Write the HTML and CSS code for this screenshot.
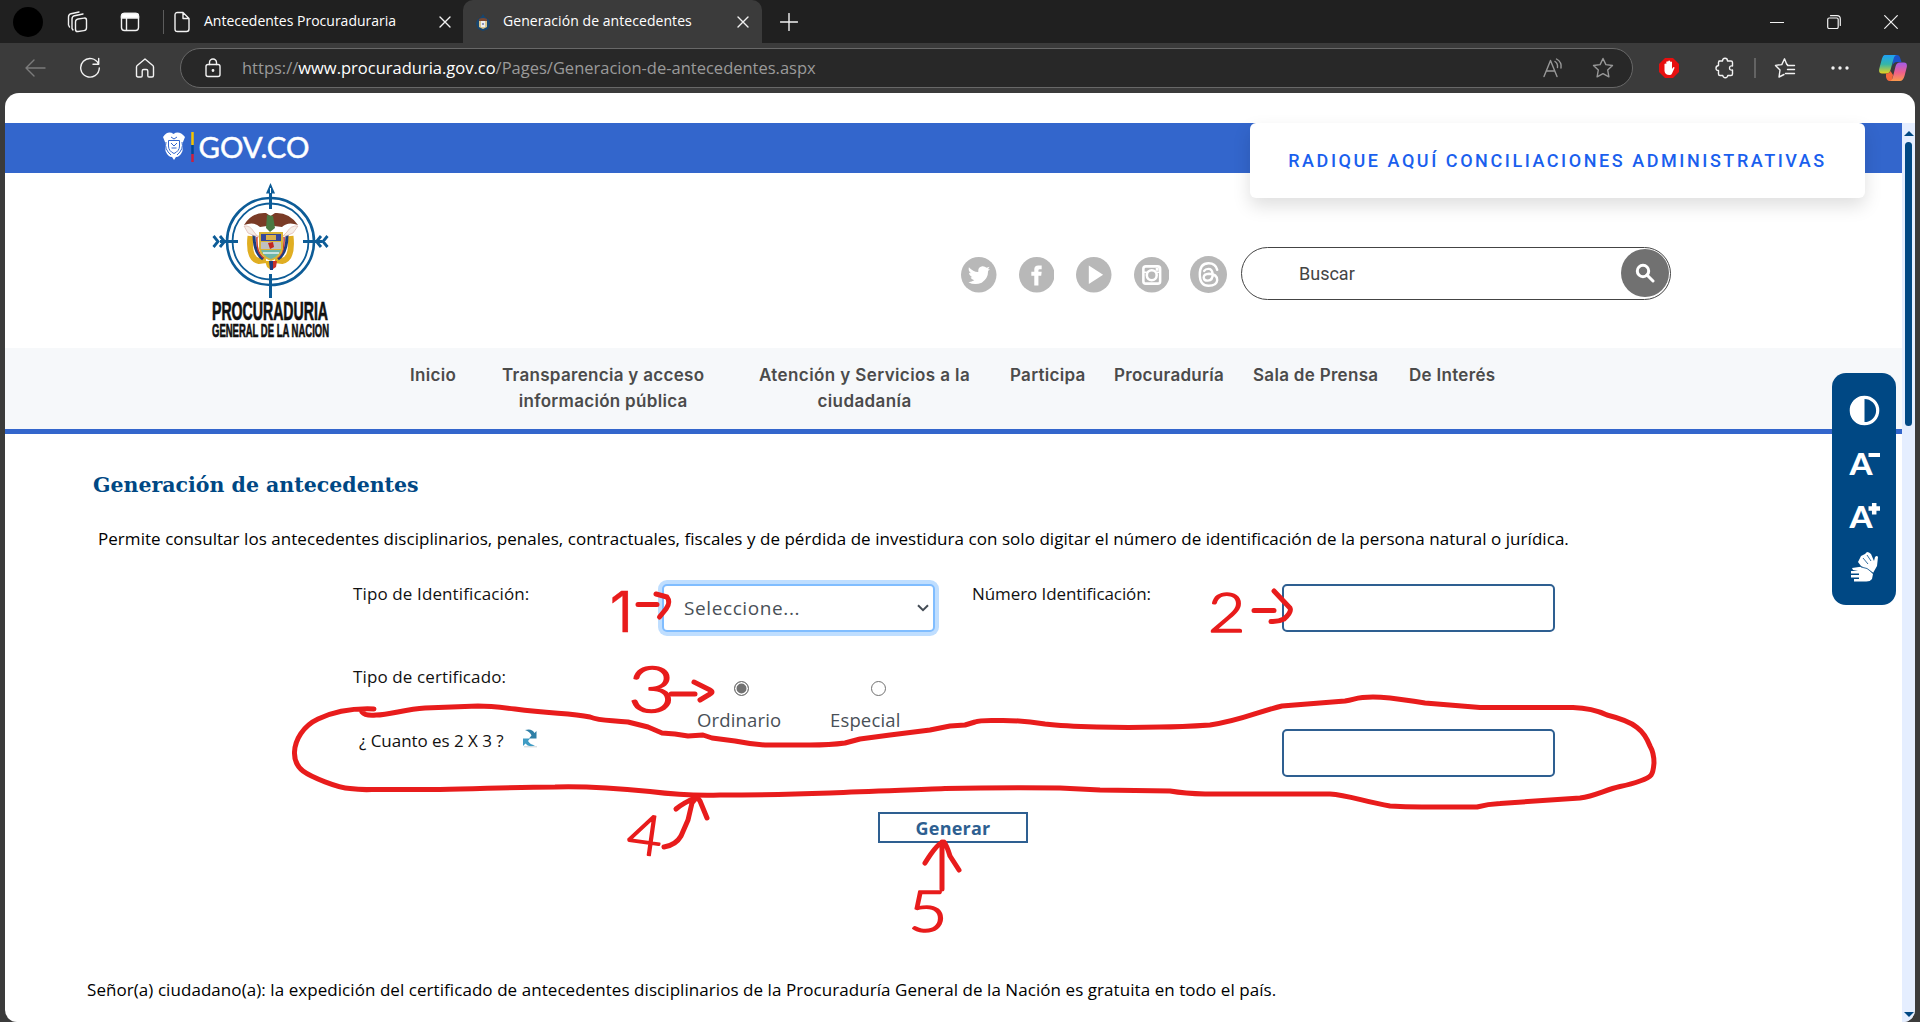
FILE: index.html
```html
<!DOCTYPE html>
<html lang="es">
<head>
<meta charset="utf-8">
<title>Generación de antecedentes</title>
<link rel="stylesheet" href="styles.css">
</head>
<body>
<div class="window">
  <header class="tabbar">
    <span class="avatar"></span>
    <svg class="ic workspaces" width="22" height="22" viewBox="0 0 22 22"><rect x="8.500" y="7.500" width="11" height="12.500" rx="2.500" transform="skewY(-8) translate(0 2)"/><path d="M5 17.500V8Q5 5.500 7.500 4.700L16 3M1.500 14V6Q1.500 3.500 4 2.700L12 1M5 17.500L6 19M1.500 14L2.500 16" /></svg>
    <svg class="ic tabactions" width="20" height="20" viewBox="0 0 20 20"><rect x="1.500" y="1.500" width="17" height="17" rx="3"/><path d="M1.500 4Q1.500 1.500 4 1.500H16Q18.500 1.500 18.500 4V6H1.500Z" fill="#fff"/><path d="M6.500 6V18"/></svg>
    <span class="sep"></span>
    <div class="tab first">
      <svg class="ic" width="18" height="22" viewBox="0 0 18 22"><path d="M2 4Q2 1.500 4.500 1.500H10L16 7.500V18Q16 20.500 13.500 20.500H4.500Q2 20.500 2 18ZM10 1.500V7.500H16"/></svg>
      <span class="title">Antecedentes Procuraduraria</span>
      <svg class="ic x" width="12" height="12" viewBox="0 0 12 12"><path d="M1 1L11 11M11 1L1 11"/></svg>
    </div>
    <div class="tab active">
      <svg width="14" height="18" viewBox="0 0 14 18"><path d="M7 0L9 3L13 6L14 10L12 15L7 17L2 15L0 10L1 6L5 3Z" fill="#17456e"/><path d="M3 5Q7 3 11 5V7H3Z" fill="#7a4730"/><path d="M3 7H11V13L7 15L3 13Z" fill="#d8c58e"/><path d="M5 7H9V13H5Z" fill="#e9eef2"/><path d="M6 9H8V11H6Z" fill="#8a93b8"/></svg>
      <span class="title">Generación de antecedentes</span>
      <svg class="ic x" width="12" height="12" viewBox="0 0 12 12"><path d="M1 1L11 11M11 1L1 11"/></svg>
    </div>
    <svg class="ic plus" width="18" height="18" viewBox="0 0 18 18"><path d="M9 .5V17.500M.5 9H17.500"/></svg>
    <div class="controls">
      <svg class="ic thin" width="14" height="14" viewBox="0 0 14 14"><path d="M.5 7.500H13.500"/></svg>
      <svg class="ic thin" width="14" height="14" viewBox="0 0 14 14"><rect x=".7" y="3" width="10.500" height="10.500" rx="1.500"/><path d="M3.500 .7H10Q13.300 .7 13.300 4V10.500"/></svg>
      <svg class="ic thin" width="14" height="14" viewBox="0 0 14 14"><path d="M.7 .7L13.300 13.300M13.300 .7L.7 13.300"/></svg>
    </div>
  </header>

  <div class="toolbar">
    <svg class="ic back" width="22" height="20" viewBox="0 0 22 20"><path d="M10 2L2 10L10 18M2 10H21"/></svg>
    <svg class="ic reload" width="22" height="22" viewBox="0 0 22 22"><path d="M19.500 7A9.300 9.300 0 1 0 20.300 11M19.700 1.500V7.200H14"/></svg>
    <svg class="ic home" width="20" height="20" viewBox="0 0 20 20"><path d="M1.500 9Q1.500 8 2.500 7.200L10 1L17.500 7.200Q18.500 8 18.500 9V17.500Q18.500 19 17 19H14Q12.800 19 12.800 17.800V13Q12.800 11.500 11.300 11.500H8.700Q7.200 11.500 7.200 13V17.800Q7.200 19 6 19H3Q1.500 19 1.500 17.500Z"/></svg>
    <div class="address">
      <svg class="ic" width="18" height="20" viewBox="0 0 18 20"><rect x="2" y="6.500" width="14" height="12" rx="2"/><path d="M5.500 6.500V4.500A3.500 3.500 0 0 1 12.500 4.500V6.500"/><circle cx="9" cy="12.500" r=".7" fill="#fff"/></svg>
      <span class="url">https://<b>www.procuraduria.gov.co</b>/Pages/Generacion-de-antecedentes.aspx</span>
      <svg class="ic dim aloud" width="20" height="20" viewBox="0 0 20 20"><path d="M1 18.500L7.500 2.500L14 18.500M3.500 13H11.500M12 3.500Q15 5.500 14.500 9.500M13.500 1Q19 4 18 10"/></svg>
      <svg class="ic dim" width="22" height="22" viewBox="0 0 22 22"><path d="M11 1.500L13.900 7.600L20.500 8.500L15.700 13L16.900 19.800L11 16.600L5.100 19.800L6.300 13L1.500 8.500L8.100 7.600Z"/></svg>
    </div>
    <svg class="blocker" width="20" height="20" viewBox="0 0 20 20"><path d="M6 0H14L20 6V14L14 20H6L0 14V6Z" fill="#e60f0f"/><path d="M5.500 11V6Q6.300 5 7.300 6V9V3.800Q8.300 2.800 9.200 3.800V8.500V3Q10.200 2 11.200 3V8.500V4Q12.200 3.200 13 4V11L14.200 9.300Q15.500 8.700 15.500 10L13 15.500Q12.500 17 10.500 17Q6 17 5.500 13Z" fill="#fff"/></svg>
    <svg class="ic puzzle" width="20" height="22" viewBox="0 0 20 22"><path d="M4 4H7.500Q7.500 1.300 10 1.300T12.500 4H16Q17.500 4 17.500 5.500V9Q14.500 8.500 14.500 11T17.500 13V17Q17.500 18.500 16 18.500H12.800Q12.500 20.700 10.300 20.700T7.800 18.500H5Q3.500 18.500 3.500 17V13.500Q1 13.500 1 11.200T3.500 8.500V5.500Q3.500 4 5 4"/></svg>
    <span class="sep2"></span>
    <svg class="ic favs" width="22" height="22" viewBox="0 0 22 22"><path d="M13.500 7.500H12.800L10.500 1.800L7.800 7.600L1.500 8.400L6 13L5 20L10 17.500M13.500 8.500H20.500M13.500 12.500H20.500M11.500 16.500H20.500"/></svg>
    <svg class="dots" width="18" height="6" viewBox="0 0 18 6"><circle cx="2" cy="3" r="1.700"/><circle cx="9" cy="3" r="1.700"/><circle cx="16" cy="3" r="1.700"/></svg>
    <svg class="copilot" width="28" height="26" viewBox="0 0 28 26">
      <defs>
        <linearGradient id="ca" x1="0" y1="0" x2="0" y2="1"><stop offset="0" stop-color="#1ea0f5"/><stop offset=".5" stop-color="#35b6a8"/><stop offset="1" stop-color="#e8d21c"/></linearGradient>
        <linearGradient id="cb" x1="0" y1="0" x2="0" y2="1"><stop offset="0" stop-color="#a25bea"/><stop offset=".55" stop-color="#f0608a"/><stop offset="1" stop-color="#fb9a4c"/></linearGradient>
      </defs>
      <path d="M14 0H18Q20.500 0 21.500 4L22.500 7H18Q14.500 7 13.500 11Z" fill="#1b52c9"/>
      <path d="M5.500 0H18Q15.500 0 14.500 4L11.500 15Q10.500 18.500 7 18.500H3Q-.8 18.500 .3 13.500L3 3.500Q4 .3 5.500 0Z" fill="url(#ca)"/>
      <path d="M7 18.500Q10.500 18.500 11.500 16L14 20L13 26H10.500Q8 26 7 22Z" fill="#f5683c"/>
      <path d="M21 7.500H25Q28.500 7.500 27.800 12L25.500 21Q24 26 21 26H10.500Q13 26 14 21.500L16.500 11.500Q17.500 7.500 21 7.500Z" fill="url(#cb)"/>
    </svg>
  </div>

  <div class="page">
    <div class="strip"></div>
    <div class="viewport">
      <div class="site">
        <div class="govbar">
          <svg width="152" height="34" viewBox="0 0 152 34">
            <g fill="#fff"><path d="M0 7Q5 0 10.500 4Q16 0 22 7L20 12L19.500 21Q17 27 13 27L11 30L9 27Q5 27 2.500 21L2 12Z"/></g>
            <g fill="none" stroke="#3366cc" stroke-width="1"><path d="M5.500 10.500H16.500V16Q16.500 21 11 23.500Q5.500 21 5.500 16ZM8 7L11 9L14 7M8 13L11 16L14 13M8.500 18H13.500M3 12Q1 19 8 25M19 12Q21 19 14 25"/></g>
            <path d="M29.500 2V15" stroke="#f5c400" stroke-width="2.500"/><path d="M29.500 15V24" stroke="#004a98" stroke-width="2.500"/><path d="M29.500 24V32" stroke="#cc1f3c" stroke-width="2.500"/>
            <text class="gov" x="35.500" y="27.500" textLength="111" lengthAdjust="spacingAndGlyphs">GOV.CO</text>
          </svg>
        </div>

        <div class="masthead">
          <svg class="crest" width="120" height="160" viewBox="-1 0 120 160">
            <g fill="none" stroke="#0d5c97"><circle cx="58.500" cy="58.500" r="43.500" stroke-width="2.600"/><circle cx="58.500" cy="58.500" r="38" stroke-width="1.800"/><path d="M58.500 8V26M58.500 91V115M8 58.500H26M91 58.500H110" stroke-width="3"/><path d="M1.500 53L6 58.500L1.500 64M8 53L12.500 58.500L8 64M115.500 53L111 58.500L115.500 64M109 53L104.500 58.500L109 64" stroke-width="2.800"/></g>
            <path d="M58.500 0L63 10.500H54Z" fill="#0d5c97"/><path d="M58.500 5V10" stroke="#fff"/>
            <path d="M38.500 53Q36 76 47 78L54 77M78.500 53Q81 76 70 78L63 77" fill="none" stroke="#e0ae22" stroke-width="6"/>
            <path d="M42 52Q42 70 51 76M75 52Q75 70 66 76" fill="none" stroke="#1d3d80" stroke-width="3"/>
            <path d="M45 54Q44 70 52 75M72 54Q73 70 65 75" fill="none" stroke="#c43a2f" stroke-width="1.500"/>
            <path d="M32 43Q38 42 42 49L46 54H70L75 49Q79 42 86 43L81 50L74 53H43L36 50Z" fill="#f6eee8" stroke="#d9a9a0" stroke-width=".6"/>
            <path d="M32 42Q40 29 54 30L58.500 33L63 30Q77 29 86 42Q76 38 70 44L62 43L59 47L55 43L48 44Q42 38 32 42Z" fill="#7a3b26"/>
            <path d="M55 32L61 33L63 45L58 49L54 45Z" fill="#4a7a42"/>
            <path d="M47 49H71V66Q70 74 59 78Q48 74 47 66Z" fill="#d9b436"/><path d="M49 51H69V58H49Z" fill="#34479a"/><path d="M54 52H64V57H54Z" fill="#d9b04d"/><path d="M49 59H69V66H49Z" fill="#bfc0c0"/><path d="M56 60L61 59L62 64L58 66Z" fill="#c5271c"/><path d="M49 67H69Q67 73 59 76Q51 73 49 67Z" fill="#6fb5a8"/><path d="M51 70H67" stroke="#e6f2f4" stroke-width="1.500"/>
            <path d="M53 78H58L59 87L55 84Z" fill="#e3b21f"/><path d="M57 78H61V87H58Z" fill="#1d3d80"/><path d="M61 78H65L64 84L61 86Z" fill="#c9312a"/>
            <text class="crest-a" x="0" y="137" textLength="116" lengthAdjust="spacingAndGlyphs">PROCURADURIA</text>
            <text class="crest-b" x="0" y="153.500" textLength="117" lengthAdjust="spacingAndGlyphs">GENERAL DE LA NACION</text>
          </svg>
          <div class="social">
            <svg viewBox="0 0 36 36"><circle cx="18" cy="18" r="18"/><path d="M8 10.500Q12.500 15.500 17.500 15.300Q17 10 21.500 9.300Q24 9 26 11L29 10L27.300 12.500L29.300 12.200L27.500 14.300Q27.500 22 21 26Q14 29 7.500 25.500Q11 25.500 13.500 23.700Q10.500 23 9.700 20.500H11.500Q8.300 19 8.200 16L10 16.500Q7 14 8 10.500Z" fill="#fff"/></svg>
            <svg viewBox="0 0 36 36"><circle cx="18" cy="18" r="18"/><path d="M15.500 29V19H12.500V15H15.500V12.500Q15.500 8.500 19.500 8.500H23V12.300H21Q19.700 12.300 19.700 13.500V15H23L22.500 19H19.700V29Z" fill="#fff"/></svg>
            <svg viewBox="0 0 36 36"><circle cx="18" cy="18" r="18"/><path d="M13 8.500L27.500 18L13 27.500Z" fill="#fff"/></svg>
            <svg viewBox="0 0 36 36"><circle cx="18" cy="18" r="18"/><rect x="9.500" y="9.500" width="17" height="17.500" rx="2.500" fill="none" stroke="#fff" stroke-width="2.600"/><circle cx="18" cy="18.500" r="5" fill="none" stroke="#fff" stroke-width="2.600"/><path d="M9 15.500H13M23 15.500H27" stroke="#fff" stroke-width="1.500"/><rect x="22" y="11" width="3" height="3" fill="#fff"/></svg>
            <svg class="threads" viewBox="0 0 36 36"><circle cx="18" cy="18" r="18"/><path d="M26.500 13.500Q25 7 18 7Q9.500 7 9.500 18T18 29Q26 29 26.500 23.500Q26.500 17.500 18.500 17.300Q13.300 17.500 13.300 21Q13.500 24 17.300 24Q22.500 23.500 22 17Q21.500 12.500 18 12.500Q15 12.500 13.800 14.500" fill="none" stroke="#fff" stroke-width="2.300" stroke-linecap="round"/></svg>
          </div>
          <div class="search"><span>Buscar</span><i><svg width="20" height="20" viewBox="0 0 20 20"><circle cx="8" cy="8" r="5.700"/><path d="M12 12L18 18"/></svg></i></div>
        </div>

        <nav class="menu">
          <a>Inicio</a><a>Transparencia y acceso<br>información pública</a><a class="wide">Atención y Servicios a la<br>ciudadanía</a><a>Participa</a><a>Procuraduría</a><a>Sala de Prensa</a><a>De Interés</a>
        </nav>

        <main class="content">
          <h1>Generación de antecedentes</h1>
          <p class="intro">Permite consultar los antecedentes disciplinarios, penales, contractuales, fiscales y de pérdida de investidura con solo digitar el número de identificación de la persona natural o jurídica.</p>
          <div class="form">
            <label>Tipo de Identificación:</label>
            <div class="select">Seleccione...<svg width="12" height="8" viewBox="0 0 12 8"><path d="M1 1.200L6 6.200L11 1.200"/></svg></div>
            <label class="num">Número Identificación:</label>
            <div class="input"></div>
            <label class="cert">Tipo de certificado:</label>
            <div class="radios">
              <span class="opt ord"><i class="radio on"></i>Ordinario</span>
              <span class="opt esp"><i class="radio"></i>Especial</span>
            </div>
            <label class="captcha">¿ Cuanto es 2 X 3 ?<svg width="16" height="19" viewBox="0 0 16 19"><path d="M3 1Q10 -1 12.500 4L14.500 2V9.500H7L9.500 6.500Q8 2.500 3 1Z" fill="#2f7fa6"/><path d="M1 9.500H8L6 12Q8 15.500 13 16.500Q6 18.500 3.500 14.500L1 17Z" fill="#3f9cc4"/><path d="M2 17.800H15" stroke="#ccd3d6"/></svg></label>
            <div class="input answer"></div>
          </div>
          <div class="generate">Generar</div>
          <p class="notice">Señor(a) ciudadano(a): la expedición del certificado de antecedentes disciplinarios de la Procuraduría General de la Nación es gratuita en todo el país.</p>
        </main>

        <div class="card">RADIQUE AQUÍ CONCILIACIONES ADMINISTRATIVAS</div>
        <aside class="access">
          <svg width="64" height="232" viewBox="0 0 64 232">
            <circle cx="32.500" cy="37.500" r="13.200" fill="none" stroke="#fff" stroke-width="3.200"/><path d="M32.500 23A14.500 14.500 0 0 0 32.500 52Z" fill="#fff"/>
            <text x="17.500" y="102" textLength="23" lengthAdjust="spacingAndGlyphs">A</text><path d="M36.500 82H48" stroke="#fff" stroke-width="4"/>
            <text x="17.500" y="155" textLength="23" lengthAdjust="spacingAndGlyphs">A</text><path d="M36.500 135.500H48M42.200 130V141.500" stroke="#fff" stroke-width="4.500"/>
            <path d="M26 189L29 183L33 181L35 179Q37 179 39 181L42 188L43 184Q45 182 46 184L45 193L41 200L35 196L29 193Z" fill="#fff"/>
            <path d="M20 195L27 194Q34 193 37 197L41 201L40 206Q38 209 33 208.500H22V206H27V204.500H19V202H27V200.500H19V198H26L21 197Z" fill="#fff"/>
            <path d="M29 194Q35 194 41 200M31 185L36 191M35 182L39 188" stroke="#004884" fill="none" stroke-width=".8"/>
          </svg>
        </aside>
      </div>
      <div class="scroll"><span class="up"></span><span class="thumb"></span><span class="down"></span></div>
    </div>
  </div>

  <svg class="ink" width="1920" height="1022" viewBox="0 0 1920 1022">
    <path d="M374 709C350 708 333 712 318 719S295 740 294.500 752Q294 764 303 771C311 777 338 788 350 788.500Q361 790 372 789.500H440C480 789 510 787 555 787C590 786 615 788 650 791.500C670 794 690 796 720 795C760 795 800 794 830 793C870 791 910 790 945 788.500Q1000 787.500 1060 788L1100 790L1170 791Q1185 793.500 1205 794H1330C1348 795 1365 802 1390 806Q1405 807 1422 807H1477Q1488 804 1500 803.500L1580 798C1595 796 1605 790 1620 786.500Q1632 784 1640 781C1652 777 1653 775 1654 763Q1654 753 1650 746C1644 730 1635 722 1607 715Q1592 708 1573 707.500H1480L1425 703C1405 700 1390 697 1373 697S1357 699 1345 701L1282 706C1260 711 1240 721 1210 725Q1180 727 1160 727C1120 728 1070 727 1045 724Q1020 720 998 720.500Q980 720 975 722L965 725L950 726L930 730L890 735L860 739L845 743Q830 745 810 745H765Q750 744 735 741L712 738L703 735L688 736L675 734L662 733L648 727L628 722C610 720 600 721 590 717C570 713 555 714 515 709Q490 706 478 706L425 708C405 709 390 715 376 715Q365 716 362 712"/>
    <path d="M638 604.500H657M656 594L667 597Q671 602 666 609L659.500 617"/>
    <path d="M1254 610.500H1274M1274 591L1290 608Q1292 612 1284 619Q1278 622 1271 621.500"/>
    <path d="M671 694H695M694 682L710 690Q714 692 710 694L700 700"/>
    <path d="M664 847Q676 845 681 836L688 820L692 803L697 797M676 809Q683 803 697 797L700 801L707 818"/>
    <path d="M942 889V842M925 863Q938 842 944 842Q947 846 950 856L959 870"/>
    <g class="digits">
      <text class="one" transform="translate(610 632)" font-size="56">1</text>
      <text transform="translate(1208 632) scale(1.150 1)" font-size="56">2</text>
      <text transform="translate(628 712) scale(1.300 1)" font-size="63">3</text>
      <text transform="translate(625 852) rotate(8) scale(1.080 1)" font-size="56">4</text>
      <text transform="translate(908 932) scale(1.180 1)" font-size="58">5</text>
    </g>
  </svg>
</div>
</body>
</html>
```
FILE: styles.css
```css
* { box-sizing: border-box; }
body { margin: 0; font-family: "Open Sans", sans-serif; background: #3b3b3b; }
svg { display: block; flex: none; }
.window { position: relative; width: 1920px; height: 1022px; overflow: hidden; display: flex; flex-direction: column; }

/* browser tabs */
.ic { fill: none; stroke: #f2f2f2; stroke-width: 1.4; stroke-linecap: round; stroke-linejoin: round; }
.ic.thin { stroke-width: 1.2; }
.ic.dim { stroke: #989898; }
.tabbar { height: 43px; flex: none; background: #202020; display: flex; align-items: center; padding-left: 13px; }
.avatar { width: 30px; height: 30px; border-radius: 50%; background: #000; }
.workspaces { margin-left: 24px; }
.tabactions { margin-left: 31px; }
.sep { width: 1px; height: 24px; background: #5c5c5c; margin-left: 23px; }
.tab { display: flex; align-items: center; height: 43px; color: #fff; font-size: 14px; white-space: nowrap; }
.tab.first { width: 299px; padding: 0 12px 0 9px; }
.tab .title { padding-bottom: 2px; }
.tab.first .title { margin-left: 13px; }
.tab .x { margin-left: auto; }
.tab.active { width: 299px; padding: 0 13px; background: #3b3b3b; border-radius: 10px 10px 0 0; }
.tab.active svg:first-child { margin-top: 2px; }
.tab.active .title { margin-left: 13px; letter-spacing: .06px; }
.plus { margin-left: 18px; }
.controls { margin-left: auto; display: flex; gap: 43px; padding-right: 22px; }

/* address row */
.toolbar { height: 50px; flex: none; display: flex; align-items: center; padding: 0 0 1px 24px; background: #3b3b3b; }
.back { stroke: #7b7b7b; }
.reload { margin-left: 33px; }
.home { margin-left: 34px; }
.address { margin-left: 25px; width: 1453px; height: 40px; border: 1.5px solid #686868; border-radius: 20px; background: #282828; display: flex; align-items: center; padding: 0 18px 0 23px; }
.url { margin-left: 20px; padding-bottom: 1px; font-size: 16.5px; color: #9a9a9a; white-space: nowrap; }
.url b { font-weight: 400; color: #fff; }
.aloud { margin-left: auto; margin-right: 29px; }
.blocker { margin-left: 26px; }
.puzzle { margin-left: 36px; }
.sep2 { width: 1.5px; height: 20px; background: #636363; margin-left: 19px; }
.favs { margin-left: 18px; }
.dots { margin-left: 35px; fill: #f2f2f2; }
.copilot { margin-left: 30px; }

/* page frame */
.page { flex: 1; margin: 0 5px; background: #fff; border-radius: 14px 14px 12px 12px; overflow: hidden; display: flex; flex-direction: column; }
.strip { height: 30px; flex: none; }
.viewport { flex: 1; display: flex; min-height: 0; }
.site { position: relative; width: 1897px; display: flex; flex-direction: column; }
.scroll { flex: 1; background: #e5eeff; display: flex; flex-direction: column; align-items: center; padding: 8px 0 5px; }
.up { border: 5px solid transparent; border-top: 0; border-bottom: 5px solid #004884; }
.thumb { width: 7px; height: 284px; margin-top: 6px; border-radius: 4px; background: #004884; }
.down { margin-top: auto; border: 5px solid transparent; border-bottom: 0; border-top: 5px solid #004884; }

/* header */
.govbar { height: 50px; flex: none; background: #3366cc; padding: 7px 0 0 158px; }
.gov { font: 400 28.500px Lato, sans-serif; fill: #fff; stroke: #fff; stroke-width: .5; }
.masthead { height: 175px; flex: none; display: flex; align-items: flex-start; padding-left: 206px; }
.crest { margin-top: 10px; }
.crest-a, .crest-b { font-family: "Liberation Sans", sans-serif; font-weight: 700; fill: #111; stroke: #111; stroke-width: .7; }
.crest-a { font-size: 25px; }
.crest-b { font-size: 18.500px; }
.social { display: flex; gap: 22px; margin: 84px 0 0 630px; fill: #b8b8b8; }
.social svg { width: 35.500px; height: 35.500px; }
.social svg.threads { width: 37px; height: 37px; margin: -1px 0 0 -1px; }
.search { margin: 74px 0 0 14px; width: 430px; height: 53px; border: 1px solid #444; border-radius: 27px; display: flex; align-items: center; padding-left: 57px; font: 18px Roboto, sans-serif; color: #444; }
.search i { margin: -2px 1px 0 auto; width: 48px; height: 48px; border-radius: 50%; background: #717171; display: grid; place-items: center; }
.search i svg { fill: none; stroke: #fff; stroke-width: 3; stroke-linecap: round; }
.menu { height: 86px; flex: none; background: #f6f8fa; border-bottom: 5px solid #3366cc; display: grid; grid-template-columns: 92px 257px 251px 104px 139px 156px 100px; padding: 14px 0 0 405px; font: 600 17px/26px Inter, sans-serif; letter-spacing: .3px; color: #4b4b4b; }
.menu a { justify-self: start; text-align: center; white-space: nowrap; }
.menu .wide { letter-spacing: .4px; }

/* content */
.content { padding-left: 82px; display: flex; flex-direction: column; color: #000; font-size: 17px; line-height: 24px; letter-spacing: .045px; }
h1 { margin: 36px 0 0 6px; font: 700 20.500px/30px "DejaVu Serif", serif; letter-spacing: 0; color: #004884; }
.intro { margin: 27px 0 0 11px; white-space: nowrap; }
.form { margin: 33px 0 0 266px; display: grid; grid-template-columns: 309px 273px 38px 309px 273px; grid-template-rows: 83px 62px 48px; align-items: start; }
.form label { margin-top: -2px; white-space: nowrap; color: #111; letter-spacing: .12px; }
.select { height: 48px; border: 2px solid #80bdff; border-radius: 5px; box-shadow: 0 0 0 4px #bfdeff; background: #fff; color: #495057; font-size: 19px; letter-spacing: .6px; display: flex; align-items: center; justify-content: space-between; padding: 0 4px 0 20px; }
.select svg { fill: none; stroke: #444c55; stroke-width: 2; }
.form .num { grid-column: 4; margin-left: -1px; letter-spacing: -.08px; }
.input { grid-column: 5; height: 48px; border: 2px solid #2e5f91; border-radius: 5px; background: #fff; }
.form .cert { grid-column: 1; }
.radios { grid-column: 2; margin-top: 14px; display: flex; color: #495057; font-size: 18.500px; letter-spacing: .15px; }
.opt { display: flex; flex-direction: column; gap: 13px; line-height: 22px; }
.ord { margin-left: 35px; width: 133px; }
.radio { width: 15px; height: 15px; margin-left: 37px; border: 1.5px solid #717171; border-radius: 50%; }
.esp .radio { margin-left: 41px; }
.radio.on { background: #717171; box-shadow: inset 0 0 0 1.5px #fff; }
.form .captcha { grid-row: 3; display: flex; margin: 0 0 0 6px; letter-spacing: -.04px; }
.captcha svg { margin: 0 0 0 18px; }
.answer { grid-row: 3; grid-column: 5; }
.generate { margin: 35px 0 0 791px; width: 150px; height: 31px; border: 2px solid #2e5f91; color: #2e5f91; font-weight: 700; font-size: 18px; line-height: 28px; text-align: center; letter-spacing: .2px; }
.notice { margin: 135px 0 0; white-space: nowrap; letter-spacing: .06px; }

/* floating pieces */
.card { position: absolute; left: 1245px; top: 0; width: 615px; height: 75px; border-radius: 6px; background: #fff; box-shadow: 0 8px 18px rgba(0, 0, 0, .13); color: #1a5fee; font: 500 18px/75px Roboto, sans-serif; letter-spacing: 2.550px; text-align: center; white-space: nowrap; }
.access { position: absolute; left: 1827px; top: 250px; border-radius: 14px; background: #004884; }
.access text { font: 900 31px Lato, sans-serif; fill: #fff; }
.ink { position: absolute; inset: 0; fill: none; stroke: #e81c1c; stroke-width: 5; stroke-linecap: round; stroke-linejoin: round; }
.digits { fill: #e81c1c; stroke: #e81c1c; stroke-width: 1.600; font-family: Lato, sans-serif; font-weight: 300; }
.digits .one { font-family: Inter, sans-serif; font-weight: 400; stroke-width: .4; }
```
